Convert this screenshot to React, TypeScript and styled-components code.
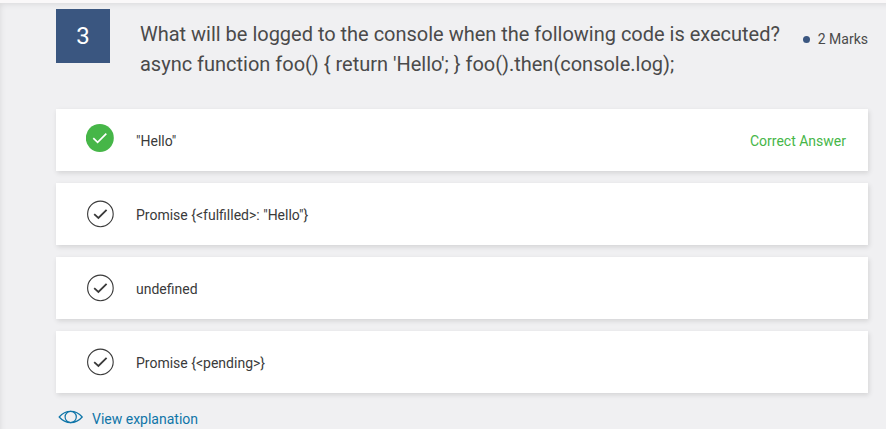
import React from "react";
import styled, { createGlobalStyle } from "styled-components";

const GlobalStyle = createGlobalStyle`
  * { box-sizing: border-box; }
  body {
    margin: 0;
    background: #faf8f9;
    font-family: Roboto, "Liberation Sans", sans-serif;
    overflow: hidden;
  }
`;

const Viewport = styled.div`
  height: 429px;
  padding-top: 3px;
  overflow: hidden;
`;

const Panel = styled.main`
  width: 896px;
  height: 446px;
  padding: 6px 18px 0 56px;
  background: #f0f0f2;
  box-shadow: inset 0 1px 6px rgba(0, 0, 0, 0.1);
`;

const Content = styled.div`
  width: 812px;
`;

const Header = styled.header`
  display: flex;
  align-items: flex-start;
  height: 100px;
`;

const QuestionNumber = styled.div`
  width: 54px;
  height: 54px;
  flex: none;
  background: #3a5680;
  color: #fff;
  font-size: 24px;
  line-height: 54px;
  text-align: center;
`;

const Question = styled.h1`
  flex: 1;
  margin: 10px 0 0 30px;
  color: #4a4a4a;
  font-size: 20px;
  font-weight: 400;
  letter-spacing: -0.01px;
  line-height: 30px;
  white-space: nowrap;
`;

const Marks = styled.div`
  display: flex;
  align-items: center;
  gap: 8px;
  margin-top: 20px;
  color: #4a4a4a;
  font-size: 14px;
  line-height: 20px;
`;

const Dot = styled.span`
  width: 7px;
  height: 7px;
  border-radius: 50%;
  background: #3a5680;
`;

const Options = styled.ul`
  display: flex;
  flex-direction: column;
  gap: 12px;
  margin: 0;
  padding: 0;
  list-style: none;
`;

const Option = styled.li`
  display: flex;
  align-items: center;
  height: 62px;
  padding: 2px 22px 0 30px;
  background: #fff;
  box-shadow: 1px 2px 5px rgba(0, 0, 0, 0.12);
  color: #3a3a3a;
  font-size: 14px;
  line-height: 20px;
`;

const StatusIcon = styled.svg<{ $correct?: boolean }>`
  width: 30px;
  height: 30px;
  flex: none;
  margin: ${({ $correct }) => ($correct ? "-6px 20px 0 0" : "-2px 20px 0 0")};
`;

const CorrectLabel = styled.span`
  margin-left: auto;
  color: #46b648;
`;

const Explanation = styled.a`
  display: flex;
  align-items: center;
  gap: 8px;
  margin: 16px 0 0 2px;
  color: #0f75a8;
  font-size: 14px;
  line-height: 20px;
`;

const EyeIcon = styled.svg`
  width: 26px;
  height: 16px;
  margin-top: -4px;
`;

const options = [
  { text: '"Hello"', correct: true },
  { text: 'Promise {<fulfilled>: "Hello"}', correct: false },
  { text: "undefined", correct: false },
  { text: "Promise {<pending>}", correct: false },
];

function Status({ correct }: { correct: boolean }) {
  return correct ? (
    <StatusIcon $correct viewBox="0 0 30 30" fill="none">
      <circle cx="13.8" cy="15" r="14" fill="#46b648" />
      <path d="M7.3 15.2l4.3 4.1 8.7-8.7" stroke="#fff" strokeWidth="1.7" />
    </StatusIcon>
  ) : (
    <StatusIcon viewBox="0 0 30 30" fill="none" stroke="#3a3a3a">
      <circle cx="14.4" cy="14.9" r="12.8" strokeWidth="1.1" />
      <path d="M8.2 15.2l4.2 3.8 8.2-8.1" strokeWidth="1.8" />
    </StatusIcon>
  );
}

export default function App() {
  return (
    <>
      <GlobalStyle />
      <Viewport>
        <Panel>
          <Content>
            <Header>
              <QuestionNumber>3</QuestionNumber>
              <Question>
                What will be logged to the console when the following code is executed?
                <br />
                async function foo() {"{ return 'Hello'; }"} foo().then(console.log);
              </Question>
              <Marks>
                <Dot />
                2 Marks
              </Marks>
            </Header>
            <Options>
              {options.map(({ text, correct }) => (
                <Option key={text}>
                  <Status correct={correct} />
                  {text}
                  {correct && <CorrectLabel>Correct Answer</CorrectLabel>}
                </Option>
              ))}
            </Options>
            <Explanation>
              <EyeIcon viewBox="0 0 26 16" fill="none" stroke="#0f75a8" strokeWidth="1.2">
                <path d="M1.2 8C4.5 4.2 8.2 2.4 12.7 2.4S20.9 4.2 24.2 8c-3.3 3.8-7 5.6-11.5 5.6S4.5 11.8 1.2 8z" />
                <circle cx="12.7" cy="8" r="5.6" />
              </EyeIcon>
              View explanation
            </Explanation>
          </Content>
        </Panel>
      </Viewport>
    </>
  );
}
